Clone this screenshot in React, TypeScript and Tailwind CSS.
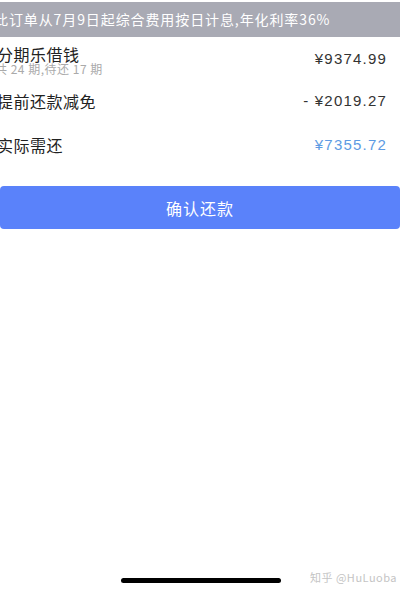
export default function App() {
  const font = { fontFamily: '"Noto Sans CJK SC", "Liberation Sans", sans-serif' };
  const num = { fontFamily: '"Liberation Sans", sans-serif' };
  return (
    <div className="relative w-[400px] h-[590px] overflow-hidden bg-white" style={font}>
      <div className="h-[2px]" />
      <div className="h-[35px] bg-[#a9aab4] flex items-center overflow-hidden">
        <span className="-ml-[6px] whitespace-nowrap text-[14px] text-white tracking-[0.9px]">
          此订单从7月9日起综合费用按日计息,年化利率36%
        </span>
      </div>

      <div className="flex justify-between h-[42px] pr-[14px]">
        <div className="flex flex-col -ml-[3px] pt-[9px]">
          <span className="text-[16px] text-[#222] leading-[16px] tracking-[0.5px]">分期乐借钱</span>
          <span className="-ml-[2px] text-[12px] text-[#aaa] leading-[13px] tracking-[0.5px]">共 24 期,待还 17 期</span>
        </div>
        <span className="self-center mt-[2px] text-[15px] text-[#333] tracking-[1.2px] -mr-[1px]" style={num}>¥9374.99</span>
      </div>

      <div className="flex items-center justify-between h-[44px] pr-[14px]">
        <span className="-ml-[3px] text-[16px] text-[#222] tracking-[0.5px]">提前还款减免</span>
        <span className="text-[15px] text-[#333] tracking-[1.2px] -mr-[1px]" style={num}>- ¥2019.27</span>
      </div>

      <div className="flex items-center justify-between h-[44px] pr-[14px]">
        <span className="-ml-[3px] text-[16px] text-[#222] tracking-[0.5px]">实际需还</span>
        <span className="text-[15px] text-[#5d9be3] tracking-[1.2px] -mr-[1px]" style={num}>¥7355.72</span>
      </div>

      <div className="mt-[19px] h-[43px] rounded-[4px] bg-[#5a82fa] flex items-center justify-center">
        <span className="text-[16px] text-white tracking-[1px]">确认还款</span>
      </div>

      <div className="absolute left-[121px] top-[578px] w-[160px] h-[5px] rounded-full bg-black" />
      <span className="absolute left-[310px] top-[569px] text-[11px] text-[#c4c4c4] whitespace-nowrap tracking-[0.5px]">知乎 @HuLuoba</span>
    </div>
  );
}
